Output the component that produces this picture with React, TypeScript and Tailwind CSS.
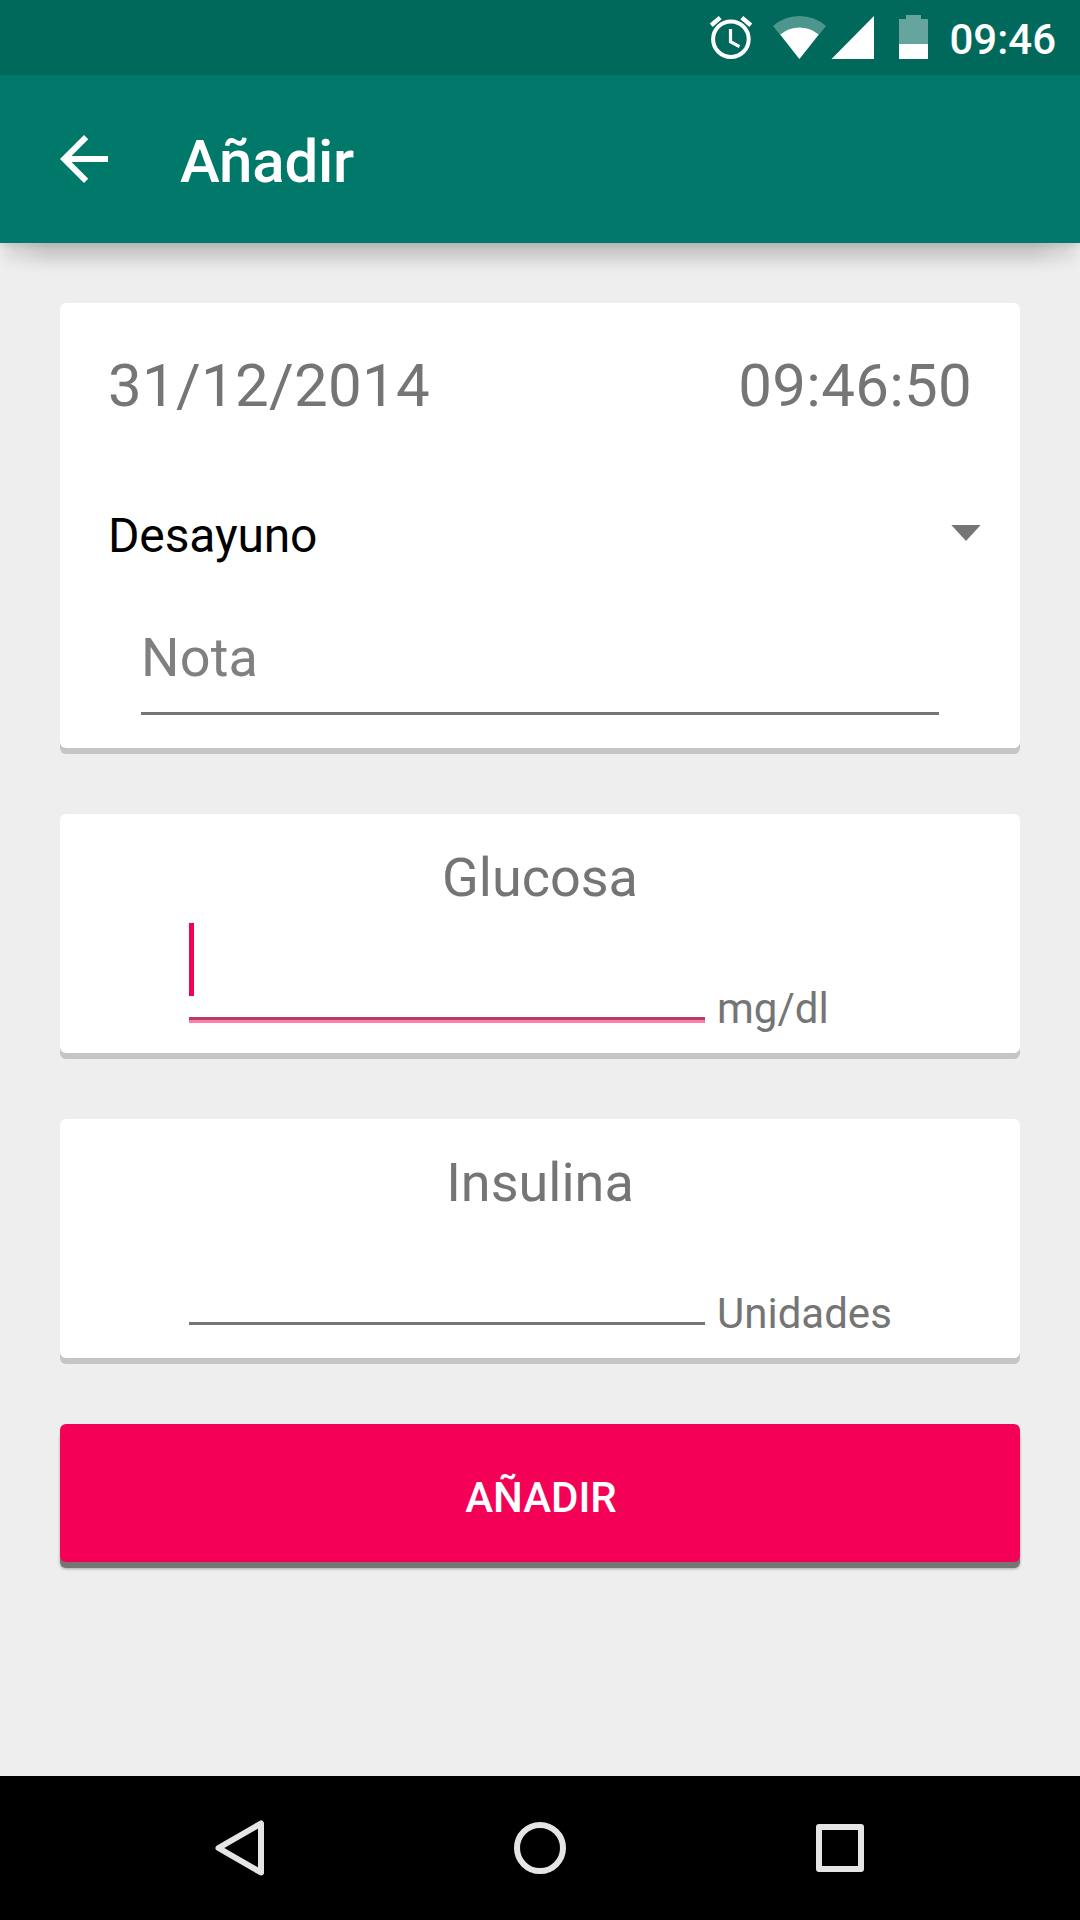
import type { ReactNode } from 'react';

function StatusIcons() {
  return (
    <svg className="h-[75px] w-[240px]" viewBox="700 0 240 75" fill="white">
      <g fill="none" stroke="white" strokeWidth="4">
        <circle cx="730.9" cy="39.2" r="17.8" />
        <path d="M730.5 29v12.7l9 5" strokeWidth="3.2" />
        <path d="M711.2 25.2l9-7.6M750.8 25.2l-9-7.6" strokeWidth="4.4" />
      </g>
      <path d="M799.4 59L773 26a40 40 0 0 1 53 0z" fillOpacity="0.3" />
      <path d="M799.4 59L780.3 34.6a29.5 29.5 0 0 1 38.4 0z" />
      <path d="M831.5 59L874 16v43z" />
      <path d="M899 44V19h7v-4h15v4h7v25z" fillOpacity="0.4" />
      <path d="M899 44h29v15h-29z" />
    </svg>
  );
}

function Card({ className, children }: { className: string; children: ReactNode }) {
  return (
    <section className={`flex flex-col rounded-[6px] bg-white shadow-[0_6px_0_#c5c5c5] ${className}`}>
      {children}
    </section>
  );
}

function Measure({ title, unit, active }: { title: string; unit: string; active?: boolean }) {
  return (
    <Card className="h-[239px] pt-8">
      <h2 className="text-center text-[54px] leading-[64px]">{title}</h2>
      <div className="mt-[13px] flex pl-[129px]">
        <div className="flex h-[100px] w-[516px] flex-col justify-between">
          <div className={active ? 'h-[73px] w-[5px] bg-[#f50057]' : 'h-[73px] w-[5px]'} />
          {active ? (
            <div className="h-[6px] border-t-[3px] border-[#b83b62] bg-[#fa80aa]" />
          ) : (
            <div className="mb-[3px] h-[3px] bg-[#757575]" />
          )}
        </div>
        <span className="mt-[61px] ml-3 text-[42px] leading-[50px]">{unit}</span>
      </div>
    </Card>
  );
}

export default function App() {
  return (
    <div className="flex h-[1920px] w-[1080px] flex-col overflow-hidden bg-[#eeeeee] font-[Roboto,sans-serif] text-[#757575]">
      <header className="shadow-[0_22px_14px_-6px_rgba(0,0,0,0.11),0_50px_20px_-34px_rgba(0,0,0,0.08),0_3px_6px_rgba(0,0,0,0.09)]">
        <div className="flex h-[75px] items-center justify-end bg-[#00695c] pr-6 text-white">
          <StatusIcons />
          <span className="mt-1 ml-[9px] text-[42px] leading-[50px] font-medium">09:46</span>
        </div>
        <div className="flex h-[168px] items-center bg-[#00796b] pl-12 text-white">
          <svg className="size-[72px]" viewBox="0 0 24 24" fill="currentColor">
            <path d="M20 11H7.83l5.59-5.59L12 4l-8 8 8 8 1.41-1.41L7.83 13H20v-2z" />
          </svg>
          <h1 className="mt-[5px] ml-[60px] text-[60px] leading-[70px] font-medium tracking-[-0.2px]">Añadir</h1>
        </div>
      </header>

      <main className="flex flex-1 flex-col px-[60px] pt-[60px]">
        <Card className="h-[445px] pt-12">
          <div className="flex justify-between px-12 text-[60px] leading-[70px] tracking-[0.28px]">
            <span>31/12/2014</span>
            <span>09:46:50</span>
          </div>
          <div className="mt-[87px] flex justify-between pr-[39px] pl-12 text-[48px] leading-[56px] tracking-[-0.15px] text-black">
            <span>Desayuno</span>
            <svg className="mt-[17px] h-4 w-[30px]" viewBox="0 0 30 16" fill="#757575">
              <path d="M0.3 0h29.4L15 16z" />
            </svg>
          </div>
          <div className="mx-[81px] mt-[62px] h-[89px] border-b-[3px] border-[#757575] text-[54px] leading-[64px] tracking-[0.2px] text-[#808080]">
            Nota
          </div>
        </Card>

        <div className="mt-[66px]">
          <Measure title="Glucosa" unit="mg/dl" active />
        </div>
        <div className="mt-[66px]">
          <Measure title="Insulina" unit="Unidades" />
        </div>

        <button className="mt-[66px] h-[138px] rounded-[6px] bg-[#f50057] pt-[9px] pl-[2px] text-[42px] leading-[50px] font-medium text-white shadow-[0_6px_0_#757575,0_7px_3px_rgba(0,0,0,0.3)]">
          AÑADIR
        </button>
      </main>

      <nav className="flex h-36 justify-center bg-black">
        <svg className="h-36 w-[700px]" viewBox="190 1776 700 144" fill="none" stroke="#e5e5e5" strokeWidth="6" strokeLinejoin="round">
          <path d="M261 1823.5v49L218.5 1848z" />
          <circle cx="540" cy="1848" r="23" />
          <rect x="819" y="1827" width="42" height="42" />
        </svg>
      </nav>
    </div>
  );
}
